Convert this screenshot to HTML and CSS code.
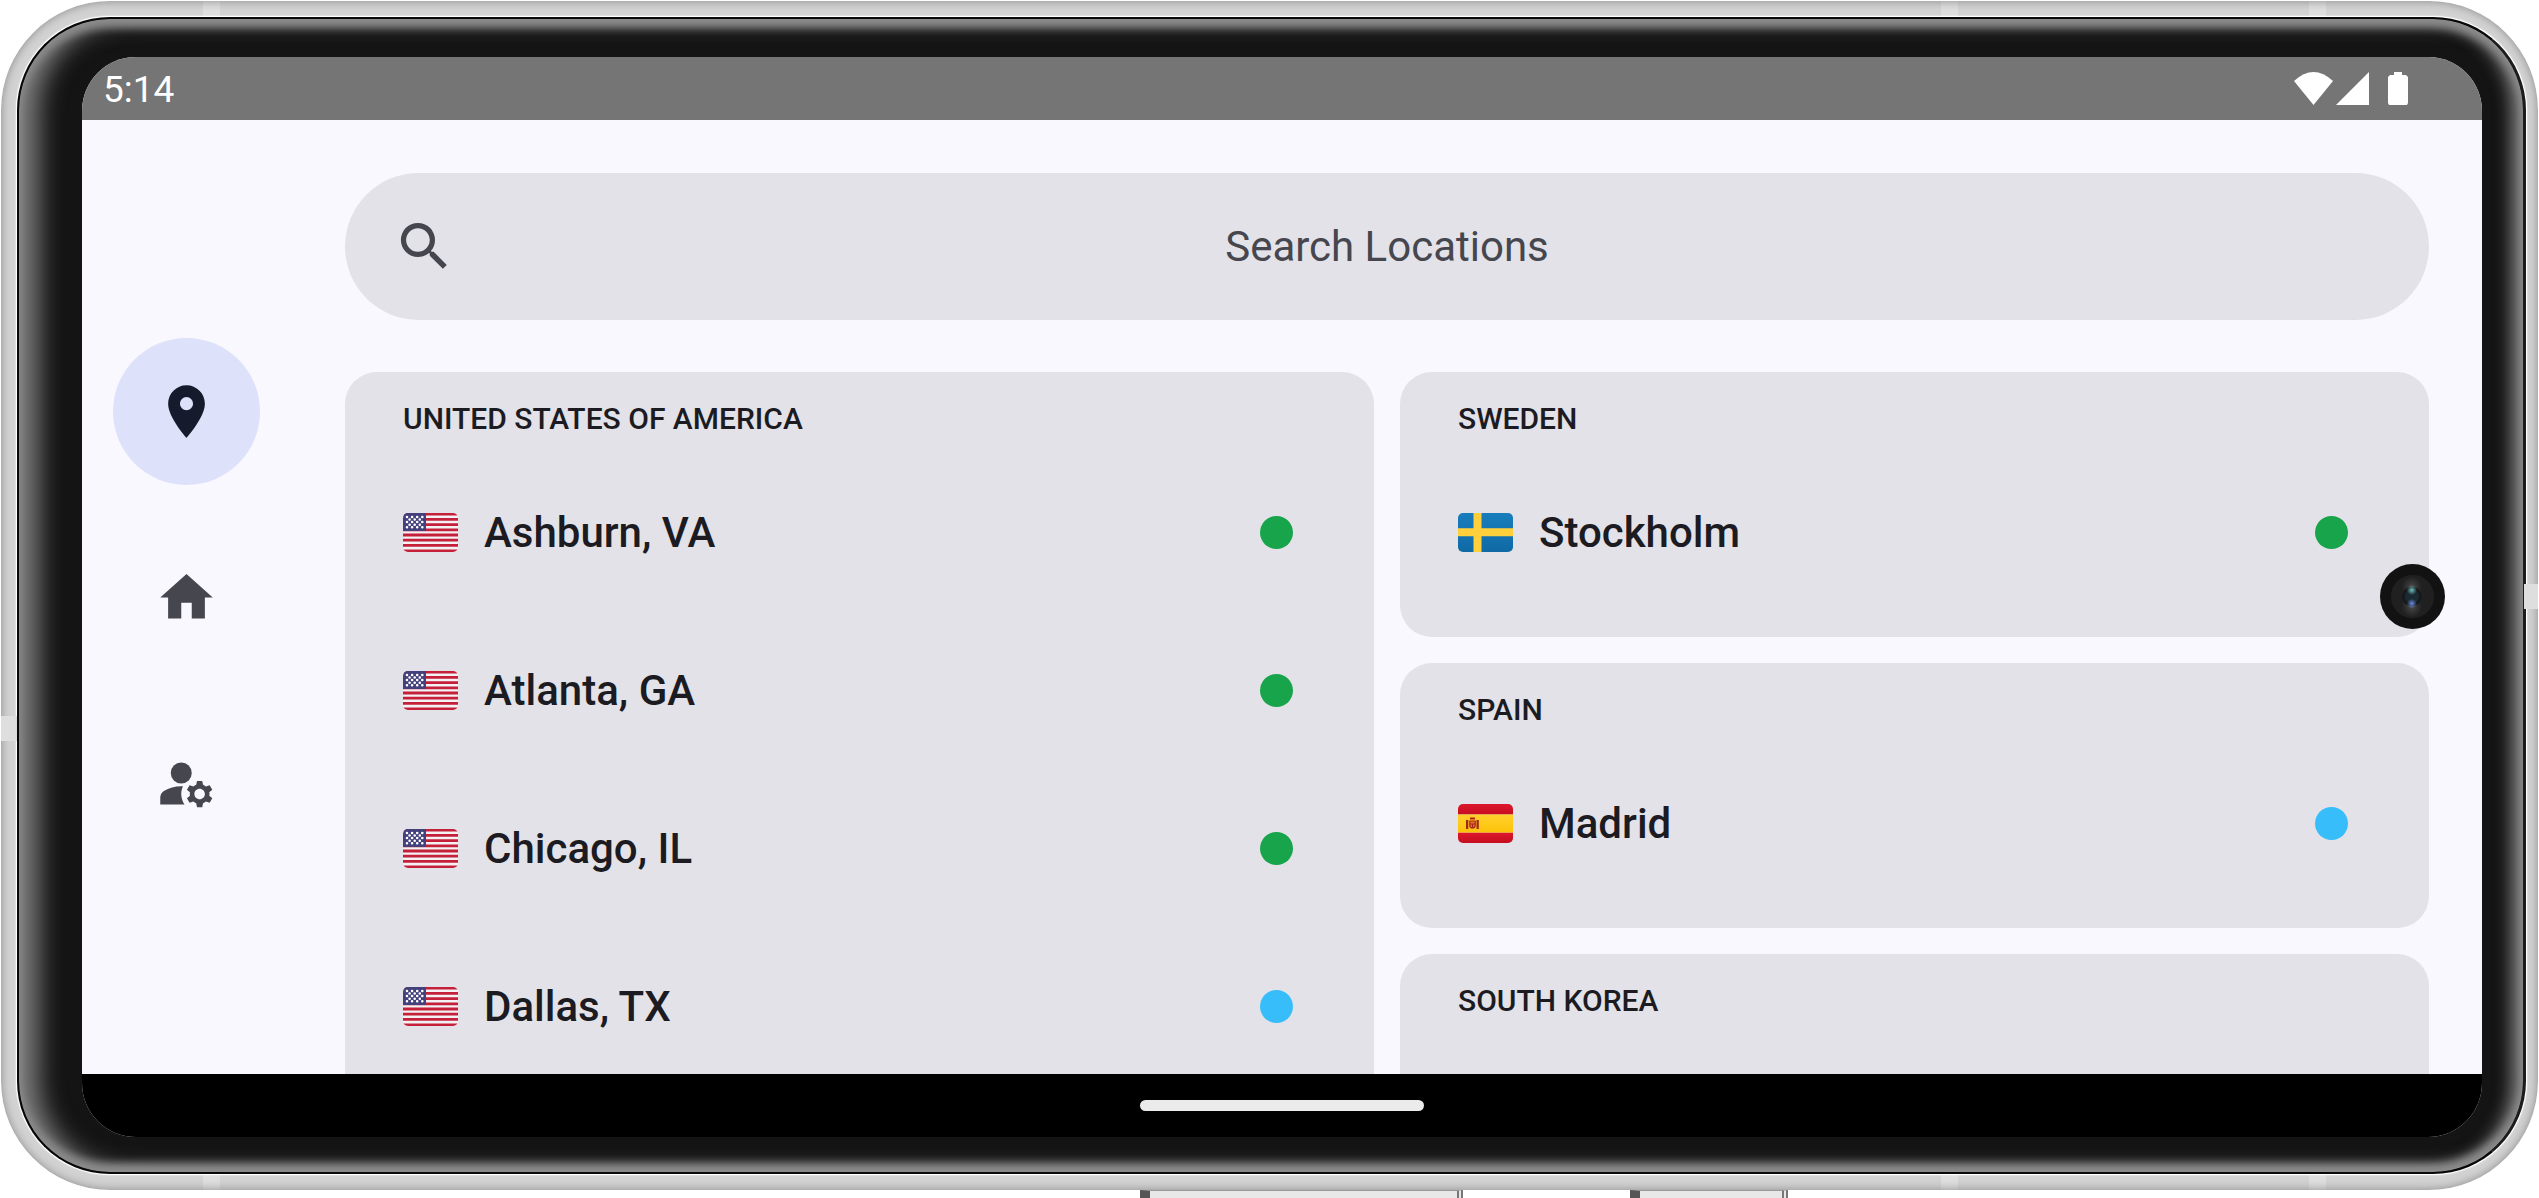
FILE: index.html
```html
<!DOCTYPE html>
<html lang="en">
<head>
    <meta charset="UTF-8">
    <meta name="viewport" content="width=device-width, initial-scale=1.0">
    <title>Locations</title>
    <link rel="stylesheet" href="styles.css">
</head>
<body>
    <!-- Shared flags -->
    <svg class="defs" aria-hidden="true">
        <symbol id="flag-us" viewBox="0 0 55 39">
            <rect width="55" height="39" fill="#f3f1f3"/>
            <path d="M0 1.2h55M0 6.4h55M0 11.6h55M0 16.8h55M0 22h55M0 27.2h55M0 32.4h55M0 37.8h55" stroke="#c4203a" stroke-width="2.8"/>
            <rect width="23" height="18" fill="#43407c"/>
            <path d="M4 4h16M4 9h16M4 14.3h16M6.6 6.5h11M6.6 11.7h11" stroke="#fff" stroke-width="2.6" stroke-linecap="round" stroke-dasharray="0 5.1"/>
        </symbol>
        <symbol id="flag-se" viewBox="0 0 55 39">
            <linearGradient id="se-blue" x2="0" y2="1"><stop stop-color="#187dbd"/><stop offset="1" stop-color="#0f6aa4"/></linearGradient>
            <rect width="55" height="39" fill="url(#se-blue)"/>
            <path d="M15.5 0h8v15.3h31.500v8H23.500V39h-8V23.300H0v-8h15.500z" fill="#ffcf3c"/>
        </symbol>
        <symbol id="flag-es" viewBox="0 0 55 39">
            <linearGradient id="es-red" x2="0" y2="1"><stop stop-color="#dd172c"/><stop offset="1" stop-color="#c50e20"/></linearGradient>
            <linearGradient id="es-yellow" x2="0" y2="1"><stop stop-color="#ffd02b"/><stop offset="1" stop-color="#fdc30a"/></linearGradient>
            <rect width="55" height="10.500" fill="url(#es-red)"/>
            <rect y="28.500" width="55" height="10.500" fill="url(#es-red)"/>
            <rect y="10.500" width="55" height="18" fill="url(#es-yellow)"/>
            <path d="M8 16h2.300v9H8zM18.500 16h2.300v9h-2.300z" fill="#a3261a"/>
            <path d="M12 13.500h5v2h-5z" fill="#b51f12"/>
            <path d="M11.800 17h5.400v4.500q0 2.500-2.700 2.500t-2.700-2.500zM12 20h5M14.500 20v3.500" fill="#e8782a" stroke="#a3261a" stroke-width="1.200"/>
        </symbol>
    </svg>

    <div class="phone">
        <i class="band band-left"></i>
        <i class="band band-right"></i>
        <div class="bezel">
            <div class="screen">
                <header class="status-bar">
                    <span class="clock">5:14</span>
                    <div class="status-icons">
                        <svg class="wifi" viewBox="0 0 39 33"><path d="M0 9Q19.500-9 39 9L19.500 33z"/></svg>
                        <svg class="signal" viewBox="0 0 33 33"><path d="M0 33L33 0v33z"/></svg>
                        <svg class="battery" viewBox="0 0 20 33"><path d="M6 0h8v3h4l2 2v26l-1 2H1l-1-2V5l2-2h4z"/></svg>
                    </div>
                </header>

                <div class="app">
                    <nav class="rail">
                        <a class="rail-item active" href="#locations" aria-label="Locations">
                            <svg class="icon" viewBox="0 0 24 24"><path d="M12 2C8.130 2 5 5.130 5 9c0 5.250 7 13 7 13s7-7.750 7-13c0-3.870-3.130-7-7-7zm0 9.500a2.500 2.500 0 0 1 0-5 2.500 2.500 0 0 1 0 5z"/></svg>
                        </a>
                        <a class="rail-item" href="#home" aria-label="Home">
                            <svg class="icon" viewBox="0 0 24 24"><path d="M10 20v-6h4v6h5v-8h3L12 3 2 12h3v8z"/></svg>
                        </a>
                        <a class="rail-item" href="#account" aria-label="Account settings">
                            <svg class="icon" viewBox="0 0 24 24"><circle cx="10" cy="8" r="4"/><path d="M10.670 13.020C10.450 13.010 10.230 13 10 13c-2.420 0-4.680.67-6.610 1.820C2.510 15.340 2 16.320 2 17.350V20h9.260C10.470 18.870 10 17.490 10 16c0-1.070.25-2.070.67-2.980zM20.750 16c0-.22-.03-.42-.06-.63l1.140-1.010-1-1.730-1.450.49c-.32-.27-.68-.48-1.080-.63L18 11h-2l-.3 1.490c-.4.15-.76.36-1.080.63l-1.450-.49-1 1.730 1.140 1.010c-.03.21-.06.41-.06.63s.03.42.06.63l-1.140 1.010 1 1.730 1.450-.49c.32.27.68.48 1.080.63L16 21h2l.3-1.490c.4-.15.76-.36 1.080-.63l1.450.49 1-1.730-1.140-1.010c.03-.21.06-.41.06-.63zM17 18c-1.100 0-2-.9-2-2s.9-2 2-2 2 .9 2 2-.9 2-2 2z"/></svg>
                        </a>
                    </nav>

                    <main class="content">
                        <form class="search">
                            <label for="search" aria-label="Search Locations">
                                <svg class="icon" viewBox="0 0 24 24"><path d="M15.500 14h-.79l-.28-.27A6.471 6.471 0 0 0 16 9.500 6.500 6.500 0 1 0 9.500 16c1.610 0 3.090-.59 4.230-1.570l.27.28v.79l5 4.990L20.490 19l-4.990-5zm-6 0C7.010 14 5 11.990 5 9.500S7.010 5 9.500 5 14 7.010 14 9.500 11.990 14 9.500 14z"/></svg>
                            </label>
                            <input type="text" id="search" name="search" placeholder="Search Locations">
                        </form>

                        <div class="countries">
                            <div class="column">
                                <section class="card">
                                    <h2>UNITED STATES OF AMERICA</h2>
                                    <button type="button" class="location">
                                        <svg class="flag"><use href="#flag-us"/></svg>
                                        <span class="name">Ashburn, VA</span>
                                        <span class="dot green"></span>
                                    </button>
                                    <button type="button" class="location">
                                        <svg class="flag"><use href="#flag-us"/></svg>
                                        <span class="name">Atlanta, GA</span>
                                        <span class="dot green"></span>
                                    </button>
                                    <button type="button" class="location">
                                        <svg class="flag"><use href="#flag-us"/></svg>
                                        <span class="name">Chicago, IL</span>
                                        <span class="dot green"></span>
                                    </button>
                                    <button type="button" class="location">
                                        <svg class="flag"><use href="#flag-us"/></svg>
                                        <span class="name">Dallas, TX</span>
                                        <span class="dot blue"></span>
                                    </button>
                                </section>
                            </div>
                            <div class="column">
                                <section class="card">
                                    <h2>SWEDEN</h2>
                                    <button type="button" class="location">
                                        <svg class="flag"><use href="#flag-se"/></svg>
                                        <span class="name">Stockholm</span>
                                        <span class="dot green"></span>
                                    </button>
                                </section>
                                <section class="card">
                                    <h2>SPAIN</h2>
                                    <button type="button" class="location">
                                        <svg class="flag"><use href="#flag-es"/></svg>
                                        <span class="name">Madrid</span>
                                        <span class="dot blue"></span>
                                    </button>
                                </section>
                                <section class="card">
                                    <h2>SOUTH KOREA</h2>
                                </section>
                            </div>
                        </div>
                    </main>
                </div>

                <footer class="gesture-bar"><span class="handle"></span></footer>
                <div class="camera"></div>
            </div>
        </div>
    </div>

    <!-- Volume and power keys below the frame -->
    <div class="keys">
        <span class="key volume"></span>
        <span class="key power"></span>
    </div>
</body>
</html>
```
FILE: styles.css
```css
* {
    box-sizing: border-box;
}

body {
    margin: 0;
    padding: 1px 1px 0;
    height: 100vh;
    display: flex;
    flex-direction: column;
    overflow: hidden;
    background: #fff;
    color: #1b1b21;
    font-family: Roboto, "Liberation Sans", sans-serif;
}

.defs {
    position: absolute;
    width: 0;
    height: 0;
}

/* Phone body */
.phone {
    position: relative;
    flex: 1;
    min-height: 0;
    display: flex;
    padding: 16px 12px 16px 16px;
    border-radius: 109px;
    background:
        linear-gradient(#dedede, #dedede) 8% 0 / 17px 100% no-repeat,
        linear-gradient(#dedede, #dedede) 77% 0 / 17px 100% no-repeat,
        linear-gradient(#dedede, #dedede) 91.6% 0 / 17px 100% no-repeat,
        #d2d2d2;
    box-shadow: inset 0 0 10px #888;
}

/* Antenna bands on the short sides */
.band {
    position: absolute;
    width: 16px;
    height: 25px;
    background: #dedede;
}

.band-left {
    left: 0;
    top: 60.1%;
}

.band-right {
    right: 0;
    top: 49%;
    width: 14px;
}

.bezel {
    flex: 1;
    min-width: 0;
    display: flex;
    padding: 38px 41px 35px 63px;
    border: 2px solid #080808;
    border-right: 3px solid #1c1c1c;
    border-radius: 93px;
    background: #141414;
    box-shadow:
        0 0 0 1px #fff,
        0 0 2px 1px #fff,
        inset 0 8px 8px #8c8c8c,
        inset 0 -8px 8px #8c8c8c,
        inset 20px 0 24px #7c7c7c,
        inset -12px 0 16px #7c7c7c;
}

.screen {
    position: relative;
    flex: 1;
    min-width: 0;
    display: flex;
    flex-direction: column;
    overflow: hidden;
    border-radius: 54px;
    background: #f9f8ff;
}

/* Status bar */
.status-bar {
    flex: none;
    height: 63px;
    display: flex;
    align-items: center;
    justify-content: space-between;
    padding: 0 74px 0 21px;
    background: #757575;
    color: #fff;
}

.clock {
    padding-top: 2px;
    font-size: 37px;
    line-height: 42px;
}

.status-icons {
    display: flex;
    gap: 3px;
    fill: #fff;
}

.wifi {
    width: 39px;
    height: 33px;
}

.signal {
    width: 33px;
    height: 33px;
}

.battery {
    width: 20px;
    height: 33px;
    margin-left: 16px;
}

/* App area */
.app {
    flex: 1;
    min-height: 0;
    display: flex;
}

.rail {
    flex: none;
    width: 208px;
    display: flex;
    flex-direction: column;
    align-items: center;
    justify-content: center;
    gap: 39px;
}

.rail-item {
    width: 147px;
    height: 147px;
    display: flex;
    align-items: center;
    justify-content: center;
    border-radius: 50%;
    color: #46464f;
}

.rail-item.active {
    background: #dde1f9;
    color: #151b2c;
}

.icon {
    display: block;
    width: 63px;
    height: 63px;
    fill: currentColor;
}

.content {
    flex: 1;
    min-width: 0;
    display: flex;
    flex-direction: column;
    gap: 52px;
    padding: 53px 53px 0 55px;
    overflow: hidden;
}

/* Search */
.search {
    flex: none;
    height: 147px;
    display: grid;
    grid-template-columns: 63px 1fr 63px;
    align-items: center;
    padding: 0 48px;
    border-radius: 74px;
    background: #e2e2e8;
    color: #46464f;
}

.search input {
    width: 100%;
    padding: 0;
    border: none;
    outline: none;
    background: none;
    color: inherit;
    font: 42px/63px Roboto, "Liberation Sans", sans-serif;
    text-align: center;
}

.search input::placeholder {
    color: #46464f;
    opacity: 1;
}

/* Countries */
.countries {
    display: grid;
    grid-template-columns: 1fr 1fr;
    align-items: start;
    gap: 26px;
}

.column {
    display: flex;
    flex-direction: column;
    gap: 26px;
}

.card {
    min-height: 265px;
    padding: 26px 81px 26px 58px;
    border-radius: 32px;
    background: #e2e2e8;
}

.card h2 {
    margin: 0 0 13px;
    font-size: 30px;
    font-weight: 500;
    line-height: 42px;
}

.location {
    width: 100%;
    height: 158px;
    display: flex;
    align-items: center;
    gap: 26px;
    padding: 0;
    border: none;
    background: none;
    color: inherit;
    font: 500 42px/63px Roboto, "Liberation Sans", sans-serif;
    text-align: left;
    cursor: pointer;
}

.flag {
    flex: none;
    width: 55px;
    height: 39px;
    border-radius: 5px;
}

.name {
    flex: 1;
}

.dot {
    width: 33px;
    height: 33px;
    border-radius: 50%;
}

.dot.green {
    background: #18a44a;
}

.dot.blue {
    background: #38bdfb;
}

/* Gesture navigation */
.gesture-bar {
    flex: none;
    height: 63px;
    display: flex;
    align-items: center;
    justify-content: center;
    background: #000;
}

.handle {
    width: 284px;
    height: 11px;
    border-radius: 6px;
    background: #ebebeb;
}

/* Front camera, sits over the app */
.camera {
    position: absolute;
    right: 37px;
    top: 50%;
    width: 65px;
    height: 65px;
    margin-top: -33px;
    border-radius: 50%;
    background:
        radial-gradient(circle at 49% 40%, #6cc0bd 0, transparent 5px),
        radial-gradient(circle at 49% 61%, #6a8ce0 0, transparent 5px),
        radial-gradient(circle at 49% 50%, #1b2933 0 6px, #141414 9px, transparent 10px),
        radial-gradient(circle at 49% 35%, #484848 0, transparent 10px),
        radial-gradient(circle at 49% 66%, #484848 0, transparent 10px),
        radial-gradient(circle, #202020 0 21px, #121212 22px);
}

/* Side keys */
.keys {
    flex: none;
    height: 8px;
    display: grid;
    grid-template-columns: 1140fr 323fr 167fr 158fr 751fr;
}

.key {
    border-left: 10px solid #555;
    border-right: 6px double #777;
    border-top: 1px solid #999;
    background: #e8e8e8;
}

.volume {
    grid-column: 2;
}

.power {
    grid-column: 4;
}
```
